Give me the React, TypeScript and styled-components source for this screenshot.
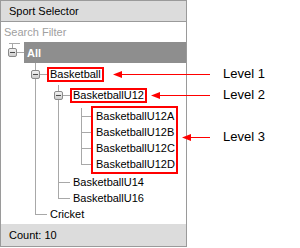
import React from 'react'
import styled, { createGlobalStyle } from 'styled-components'

const LINE = '#a8a8a8'
const MARK = '#ff0000'

const GlobalStyle = createGlobalStyle`
  html, body {
    margin: 0;
    padding: 0;
    background: #fff;
  }
  body {
    font-family: "Liberation Sans", Arial, sans-serif;
    font-size: 11px;
    color: #000;
  }
`

const Canvas = styled.div`
  position: relative;
  width: 300px;
  height: 248px;
`

const Panel = styled.div`
  display: flex;
  flex-direction: column;
  width: 187px;
  height: 247px;
  box-sizing: border-box;
  border: 1px solid #9a9a9a;
  background: #fff;
`

const Header = styled.div`
  display: flex;
  align-items: center;
  height: 21px;
  box-sizing: border-box;
  padding-left: 8px;
  border-bottom: 1px solid #9a9a9a;
  background: #dcdcdc;
`

const Search = styled.input`
  display: block;
  height: 20px;
  box-sizing: border-box;
  width: 100%;
  margin: 0;
  padding: 0 0 0 3px;
  border: none;
  outline: none;
  font: inherit;
  background: #fff;

  &::placeholder {
    color: #a0a0a0;
  }
`

const Tree = styled.div`
  flex: 1;
  position: relative;
  overflow: hidden;
`

const List = styled.ul`
  list-style: none;
  margin: 0;
  padding: 0;
`

// the vertical line of a child group runs through each item, down to the last one's stub
const Item = styled.li<{ $x: number; $last?: boolean; $mid?: number }>`
  position: relative;

  &::before {
    content: '';
    position: absolute;
    left: ${p => p.$x}px;
    top: 0;
    width: 1px;
    height: ${p => (p.$last ? `${p.$mid}px` : '100%')};
    background: ${LINE};
  }
`

const RootItem = styled.li`
  position: relative;

  &::before {
    content: '';
    position: absolute;
    left: 11px;
    top: 1px;
    width: 1px;
    height: 6px;
    background: ${LINE};
  }

  &::after {
    content: '';
    position: absolute;
    left: 8px;
    top: 1px;
    width: 11px;
    height: 1px;
    background: ${LINE};
  }
`

const Row = styled.div<{ $h: number; $pad: number }>`
  display: flex;
  align-items: center;
  height: ${p => p.$h}px;
  padding-left: ${p => p.$pad}px;
`

const Toggle = styled.span`
  position: relative;
  z-index: 1;
  flex: none;
  box-sizing: border-box;
  width: 9px;
  height: 9px;
  border: 1px solid #8a8a8a;
  border-radius: 2px;
  background: linear-gradient(#f2f2f2, #cdcdcd);

  &::after {
    content: '';
    position: absolute;
    left: 1px;
    right: 1px;
    top: 3px;
    height: 1px;
    background: #4a4a4a;
  }
`

const Stub = styled.span<{ $w: number }>`
  flex: none;
  width: ${p => p.$w}px;
  height: 1px;
  background: ${LINE};
`

const Label = styled.span<{ $mark?: boolean }>`
  flex: none;
  border: 2px solid ${p => (p.$mark ? MARK : 'transparent')};
  padding: 0 1px;
  line-height: 11px;
  white-space: nowrap;
`

const Selected = styled.span`
  flex: 1;
  align-self: stretch;
  display: flex;
  align-items: center;
  padding-left: 3px;
  background: #8e8e8e;
  color: #fff;
  font-weight: bold;
`

const Group = styled.ul`
  list-style: none;
  width: max-content;
  margin: 0 0 0 90px;
  padding: 0;
  border: 2px solid ${MARK};
`

const GroupItem = styled(Item)`
  margin-left: -12px;
`

const GroupLabel = styled.span`
  flex: none;
  padding: 0 1px 0 5px;
  line-height: 11px;
  white-space: nowrap;
`

const Footer = styled.div`
  display: flex;
  align-items: center;
  height: 22px;
  padding-left: 8px;
  background: #dcdcdc;
`

const Callout = styled.div<{ $x: number; $y: number }>`
  position: absolute;
  left: ${p => p.$x}px;
  top: ${p => p.$y - 5}px;
  display: flex;
  align-items: center;
  height: 10px;
`

const CalloutText = styled.span`
  margin-left: 13px;
  font-size: 13px;
  line-height: 10px;
  white-space: nowrap;
`

const Arrow = ({ w }: { w: number }) => (
  <svg width={w} height={9} viewBox={`0 0 ${w} 9`}>
    <polygon points="0,4.5 9,1 9,8" fill={MARK} />
    <line x1={8} y1={4.5} x2={w} y2={4.5} stroke={MARK} strokeWidth={1} />
  </svg>
)

const under12 = ['A', 'B', 'C', 'D']

const notes = [
  { x: 113, y: 74, text: 'Level 1' },
  { x: 151, y: 95, text: 'Level 2' },
  { x: 182, y: 137, text: 'Level 3' },
]

export default function App() {
  return (
    <Canvas>
      <GlobalStyle />
      <Panel>
        <Header>Sport Selector</Header>
        <Search placeholder="Search Filter" />
        <Tree>
          <List>
            <RootItem>
              <Row $h={21} $pad={7}>
                <Toggle />
                <Stub $w={7} />
                <Selected>All</Selected>
              </Row>
              <List>
                <Item $x={34}>
                  <Row $h={22} $pad={30}>
                    <Toggle />
                    <Stub $w={7} />
                    <Label $mark>Basketball</Label>
                  </Row>
                  <List>
                    <Item $x={57}>
                      <Row $h={21} $pad={53}>
                        <Toggle />
                        <Stub $w={7} />
                        <Label $mark>BasketballU12</Label>
                      </Row>
                      <Group>
                        {under12.map((s, i) => (
                          <GroupItem key={s} $x={0} $last={i === under12.length - 1} $mid={8}>
                            <Row $h={16} $pad={0}>
                              <Stub $w={10} />
                              <GroupLabel>BasketballU12{s}</GroupLabel>
                            </Row>
                          </GroupItem>
                        ))}
                      </Group>
                    </Item>
                    <Item $x={57}>
                      <Row $h={16} $pad={57}>
                        <Stub $w={12} />
                        <Label>BasketballU14</Label>
                      </Row>
                    </Item>
                    <Item $x={57} $last $mid={8}>
                      <Row $h={16} $pad={57}>
                        <Stub $w={12} />
                        <Label>BasketballU16</Label>
                      </Row>
                    </Item>
                  </List>
                </Item>
                <Item $x={34} $last $mid={8}>
                  <Row $h={16} $pad={34}>
                    <Stub $w={12} />
                    <Label>Cricket</Label>
                  </Row>
                </Item>
              </List>
            </RootItem>
          </List>
        </Tree>
        <Footer>Count: 10</Footer>
      </Panel>
      {notes.map(n => (
        <Callout key={n.text} $x={n.x} $y={n.y}>
          <Arrow w={210 - n.x} />
          <CalloutText>{n.text}</CalloutText>
        </Callout>
      ))}
    </Canvas>
  )
}
